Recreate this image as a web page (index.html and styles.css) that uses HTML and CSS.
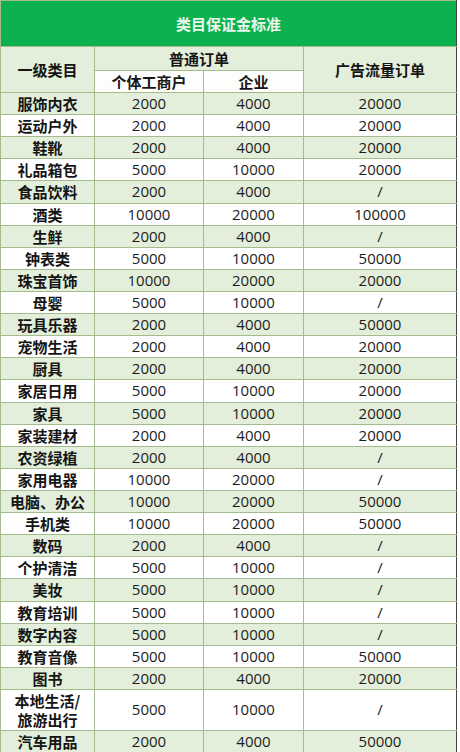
FILE: index.html
```html
<!DOCTYPE html>
<html lang="zh">
<head>
<meta charset="utf-8">
<title>类目保证金标准</title>
<link rel="stylesheet" href="styles.css">
</head>
<body>
<table class="fee">
  <colgroup>
    <col class="c1"><col class="c2"><col class="c3"><col class="c4">
  </colgroup>
  <thead>
    <tr class="title-row"><th colspan="4" class="title">类目保证金标准</th></tr>
    <tr class="head1">
      <th rowspan="2" class="hg">一级类目</th>
      <th colspan="2" class="hg">普通订单</th>
      <th rowspan="2" class="hg">广告流量订单</th>
    </tr>
    <tr class="head2">
      <th class="hw">个体工商户</th>
      <th class="hw">企业</th>
    </tr>
  </thead>
  <tbody>
    <tr class="g"><td class="cat">服饰内衣</td><td>2000</td><td>4000</td><td>20000</td></tr>
    <tr><td class="cat">运动户外</td><td>2000</td><td>4000</td><td>20000</td></tr>
    <tr class="g"><td class="cat">鞋靴</td><td>2000</td><td>4000</td><td>20000</td></tr>
    <tr><td class="cat">礼品箱包</td><td>5000</td><td>10000</td><td>20000</td></tr>
    <tr class="g"><td class="cat">食品饮料</td><td>2000</td><td>4000</td><td>/</td></tr>
    <tr><td class="cat">酒类</td><td>10000</td><td>20000</td><td>100000</td></tr>
    <tr class="g"><td class="cat">生鲜</td><td>2000</td><td>4000</td><td>/</td></tr>
    <tr><td class="cat">钟表类</td><td>5000</td><td>10000</td><td>50000</td></tr>
    <tr class="g"><td class="cat">珠宝首饰</td><td>10000</td><td>20000</td><td>20000</td></tr>
    <tr><td class="cat">母婴</td><td>5000</td><td>10000</td><td>/</td></tr>
    <tr class="g"><td class="cat">玩具乐器</td><td>2000</td><td>4000</td><td>50000</td></tr>
    <tr><td class="cat">宠物生活</td><td>2000</td><td>4000</td><td>20000</td></tr>
    <tr class="g"><td class="cat">厨具</td><td>2000</td><td>4000</td><td>20000</td></tr>
    <tr><td class="cat">家居日用</td><td>5000</td><td>10000</td><td>20000</td></tr>
    <tr class="g"><td class="cat">家具</td><td>5000</td><td>10000</td><td>20000</td></tr>
    <tr><td class="cat">家装建材</td><td>2000</td><td>4000</td><td>20000</td></tr>
    <tr class="g"><td class="cat">农资绿植</td><td>2000</td><td>4000</td><td>/</td></tr>
    <tr><td class="cat">家用电器</td><td>10000</td><td>20000</td><td>/</td></tr>
    <tr class="g"><td class="cat">电脑、办公</td><td>10000</td><td>20000</td><td>50000</td></tr>
    <tr><td class="cat">手机类</td><td>10000</td><td>20000</td><td>50000</td></tr>
    <tr class="g"><td class="cat">数码</td><td>2000</td><td>4000</td><td>/</td></tr>
    <tr><td class="cat">个护清洁</td><td>5000</td><td>10000</td><td>/</td></tr>
    <tr class="g"><td class="cat">美妆</td><td>5000</td><td>10000</td><td>/</td></tr>
    <tr><td class="cat">教育培训</td><td>5000</td><td>10000</td><td>/</td></tr>
    <tr class="g"><td class="cat">数字内容</td><td>5000</td><td>10000</td><td>/</td></tr>
    <tr><td class="cat">教育音像</td><td>5000</td><td>10000</td><td>50000</td></tr>
    <tr class="g"><td class="cat">图书</td><td>2000</td><td>4000</td><td>20000</td></tr>
    <tr class="tall"><td class="cat">本地生活/<br>旅游出行</td><td>5000</td><td>10000</td><td>/</td></tr>
    <tr class="g last"><td class="cat">汽车用品</td><td>2000</td><td>4000</td><td>50000</td></tr>
  </tbody>
</table>
</body>
</html>
```
FILE: styles.css
```css
html, body {
  margin: 0;
  padding: 0;
  background: #ffffff;
}

body {
  width: 460px;
  height: 752px;
  overflow: hidden;
}

.fee {
  border-collapse: collapse;
  table-layout: fixed;
  width: 456px;
  font-family: "Open Sans", "Noto Sans CJK SC", sans-serif;
  font-size: 15px;
  color: #1c1c1c;
}

.c1 { width: 94px; }
.c2 { width: 109px; }
.c3 { width: 100px; }
.c4 { width: 153px; }

.fee th,
.fee td {
  border: 1px solid #a4bb8e;
  padding: 0;
  text-align: center;
  vertical-align: middle;
  line-height: 19px;
}

.title-row { height: 46px; }

.title {
  background: #0bb14d;
  color: #e9f7ec;
  font-family: "Noto Sans CJK SC", sans-serif;
  font-weight: 700;
  font-size: 15px;
  border-color: #0bb14d;
  border-left-color: #b9c9b0;
  border-right-color: #444444;
}

.head1 { height: 24px; }
.head2 { height: 22px; }

.hg,
.hw {
  font-family: "Noto Sans CJK SC", sans-serif;
  font-weight: 700;
  font-size: 15px;
  color: #151515;
}

.hg { background: #e3efda; }
.hw { background: #fdfefc; }

.fee tbody tr { height: 22.12px; }
.fee tbody tr.tall { height: 40.7px; }
.fee tbody tr.last { height: 22px; }

.fee tbody tr.g td { background: #e3efda; }
.fee tbody td { background: #ffffff; }

.cat {
  font-family: "Noto Sans CJK SC", sans-serif;
  font-weight: 700;
  font-size: 15px;
  color: #151515;
}

.tall .cat { line-height: 19px; }

.fee th:last-child,
.fee td:last-child {
  border-right-color: #444444;
}
```
